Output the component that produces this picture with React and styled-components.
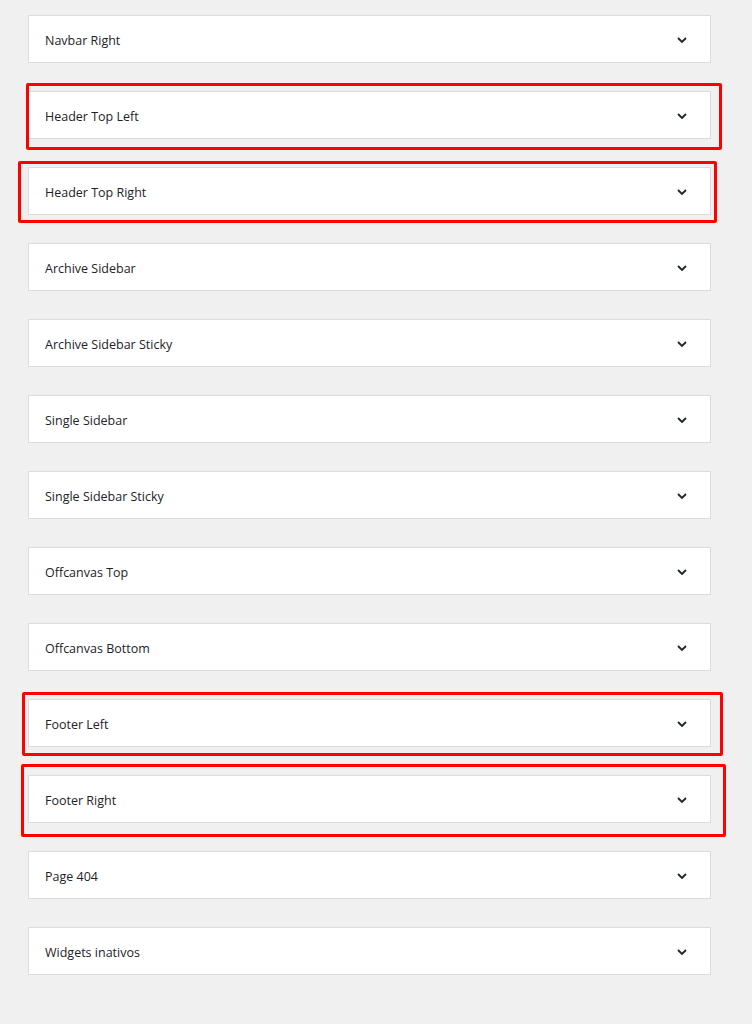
import styled, { createGlobalStyle } from "styled-components";

const GlobalStyle = createGlobalStyle`
  body {
    margin: 0;
    background: #f0f0f1;
    font-family: "Open Sans", "Noto Sans", sans-serif;
  }
`;

const List = styled.div`
  display: flex;
  flex-direction: column;
  gap: 28px;
  width: 683px;
  padding: 15px 0 48px 28px;
`;

const Panel = styled.div`
  position: relative;
  box-sizing: border-box;
  height: 48px;
  display: flex;
  align-items: center;
  justify-content: space-between;
  padding: 2px 22px 0 16px;
  background: #fff;
  border: 1px solid #dcdcde;
`;

const Title = styled.h3`
  margin: 0;
  font-size: 12.5px;
  font-weight: 500;
  color: #1d2327;
`;

const Mark = styled.div`
  position: absolute;
  border: 3px solid #ff0000;
  border-radius: 2px;
  pointer-events: none;
`;

const Chevron = () => (
  <svg width="12" height="8" viewBox="0 0 12 8" fill="none">
    <path d="M2 2l4 4 4-4" stroke="#1d2327" strokeWidth="1.8" />
  </svg>
);

// offsets are measured from the panel's padding box
const areas = [
  { name: "Navbar Right" },
  { name: "Header Top Left", mark: { left: -3, top: -9, right: -12, bottom: -12 } },
  { name: "Header Top Right", mark: { left: -11, top: -7, right: -7, bottom: -9 } },
  { name: "Archive Sidebar" },
  { name: "Archive Sidebar Sticky" },
  { name: "Single Sidebar" },
  { name: "Single Sidebar Sticky" },
  { name: "Offcanvas Top" },
  { name: "Offcanvas Bottom" },
  { name: "Footer Left", mark: { left: -7, top: -8, right: -13, bottom: -10 } },
  { name: "Footer Right", mark: { left: -8, top: -12, right: -16, bottom: -15 } },
  { name: "Page 404" },
  { name: "Widgets inativos" },
];

function App() {
  return (
    <>
      <GlobalStyle />
      <List>
        {areas.map((area) => (
          <Panel key={area.name}>
            <Title>{area.name}</Title>
            <Chevron />
            {area.mark && <Mark style={area.mark} />}
          </Panel>
        ))}
      </List>
    </>
  );
}

export default App;
